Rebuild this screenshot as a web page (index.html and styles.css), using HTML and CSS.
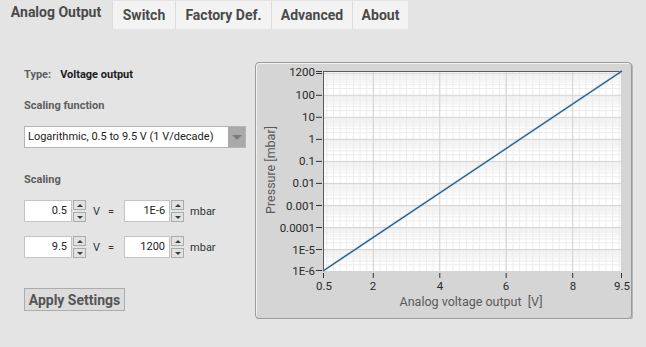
FILE: index.html
```html
<!DOCTYPE html>
<html lang="en">
<head>
    <meta charset="UTF-8">
    <title>Analog Output</title>
    <link rel="stylesheet" href="styles.css">
</head>
<body>
    <div class="tabs">
        <div class="tab active">Analog Output</div>
        <div class="tab tab-switch">Switch</div>
        <div class="tab tab-factory">Factory Def.</div>
        <div class="tab tab-advanced">Advanced</div>
        <div class="tab tab-about">About</div>
    </div>
    <div class="content">
        <div class="settings">
            <div class="type-row"><span class="label">Type:</span><span class="type-value">Voltage output</span></div>
            <div class="label section">Scaling function</div>
            <div class="select">
                <span class="select-text">Logarithmic, 0.5 to 9.5 V (1 V/decade)</span>
                <span class="select-arrow"></span>
            </div>
            <div class="label section scaling">Scaling</div>
            <div class="scale-row">
                <div class="num num-volt">0.5</div>
                <div class="spin"><span class="up"></span><span class="down"></span></div>
                <span class="unit">V</span><span class="eq">=</span>
                <div class="num num-press">1E-6</div>
                <div class="spin"><span class="up"></span><span class="down"></span></div>
                <span class="unit-mbar">mbar</span>
            </div>
            <div class="scale-row second">
                <div class="num num-volt">9.5</div>
                <div class="spin"><span class="up"></span><span class="down"></span></div>
                <span class="unit">V</span><span class="eq">=</span>
                <div class="num num-press">1200</div>
                <div class="spin"><span class="up"></span><span class="down"></span></div>
                <span class="unit-mbar">mbar</span>
            </div>
            <button class="apply">Apply Settings</button>
        </div>
        <div class="chart">
            <svg width="375" height="255" viewBox="0 0 375 255">
                <defs>
                    <pattern id="xminor" patternUnits="userSpaceOnUse" x="51.39" y="0" width="6.644" height="257">
                        <rect width="1" height="257" fill="#ececec"/>
                    </pattern>
                    <pattern id="xmajor" patternUnits="userSpaceOnUse" x="51.39" y="0" width="66.44" height="257">
                        <rect width="1" height="257" fill="#d2d2d2"/>
                    </pattern>
                    <pattern id="yminor" patternUnits="userSpaceOnUse" x="0" y="10.745" width="377" height="22.03">
                        <rect y="1.01" width="377" height="1" fill="#ececec"/>
                        <rect y="2.14" width="377" height="1" fill="#ececec"/>
                        <rect y="3.41" width="377" height="1" fill="#ececec"/>
                        <rect y="4.89" width="377" height="1" fill="#ececec"/>
                        <rect y="6.63" width="377" height="1" fill="#ececec"/>
                        <rect y="8.77" width="377" height="1" fill="#ececec"/>
                        <rect y="11.52" width="377" height="1" fill="#ececec"/>
                        <rect y="15.40" width="377" height="1" fill="#ececec"/>
                    </pattern>
                    <pattern id="ymajor" patternUnits="userSpaceOnUse" x="0" y="10.745" width="377" height="22.03">
                        <rect y="0" width="377" height="1" fill="#d2d2d2"/>
                    </pattern>
                </defs>
                <g transform="translate(-1,-1)">
                    <!-- plot area -->
                    <rect x="68" y="9" width="299" height="200" fill="#fff"/>
                    <rect x="68" y="9" width="299" height="200" fill="url(#xminor)"/>
                    <rect x="68" y="9" width="299" height="200" fill="url(#yminor)"/>
                    <rect x="68" y="9" width="299" height="200" fill="url(#xmajor)"/>
                    <rect x="68" y="9" width="299" height="200" fill="url(#ymajor)"/>
                    <line x1="68" y1="9.5" x2="367" y2="9.5" stroke="#5a5a5a"/>
                    <line x1="68.5" y1="9" x2="68.5" y2="209" stroke="#5a5a5a"/>
                    <line x1="366.5" y1="9" x2="366.5" y2="209" stroke="#d2d2d2"/>

                    <!-- curve -->
                    <line x1="68" y1="209" x2="367" y2="9" stroke="#9cc3e0" stroke-width="2.4" opacity="0.5"/>
                    <line x1="68" y1="209" x2="367" y2="9" stroke="#225d8c" stroke-width="1.3"/>

                    <!-- y axis -->
                    <g class="ticks" stroke="#333" stroke-width="1">
                        <line x1="61" y1="9.5" x2="67" y2="9.5"/>
                        <line x1="61" y1="11.5" x2="67" y2="11.5"/>
                        <line x1="61" y1="33.3" x2="67" y2="33.3"/>
                        <line x1="61" y1="55.3" x2="67" y2="55.3"/>
                        <line x1="61" y1="77.4" x2="67" y2="77.4"/>
                        <line x1="61" y1="99.4" x2="67" y2="99.4"/>
                        <line x1="61" y1="121.4" x2="67" y2="121.4"/>
                        <line x1="61" y1="143.5" x2="67" y2="143.5"/>
                        <line x1="61" y1="165.5" x2="67" y2="165.5"/>
                        <line x1="61" y1="187.5" x2="67" y2="187.5"/>
                        <line x1="61" y1="208.5" x2="67" y2="208.5"/>
                    </g>
                    <g class="tick-label" text-anchor="end">
                        <text x="60" y="13.5">1200</text>
                        <text x="60" y="37.3">100</text>
                        <text x="60" y="59.3">10</text>
                        <text x="60" y="81.4">1</text>
                        <text x="60" y="103.4">0.1</text>
                        <text x="60" y="125.4">0.01</text>
                        <text x="60" y="147.5">0.001</text>
                        <text x="60" y="169.5">0.0001</text>
                        <text x="60" y="191.5">1E-5</text>
                        <text x="60" y="212.5">1E-6</text>
                    </g>

                    <!-- x axis -->
                    <g class="ticks" stroke="#333" stroke-width="1">
                        <line x1="68.5" y1="211" x2="68.5" y2="216"/>
                        <line x1="118.3" y1="211" x2="118.3" y2="216"/>
                        <line x1="184.8" y1="211" x2="184.8" y2="216"/>
                        <line x1="251.2" y1="211" x2="251.2" y2="216"/>
                        <line x1="317.7" y1="211" x2="317.7" y2="216"/>
                        <line x1="366.5" y1="211" x2="366.5" y2="216"/>
                    </g>
                    <g class="tick-label" text-anchor="middle">
                        <text x="69" y="228">0.5</text>
                        <text x="118" y="228">2</text>
                        <text x="185" y="228">4</text>
                        <text x="251" y="228">6</text>
                        <text x="318" y="228">8</text>
                        <text x="367" y="228">9.5</text>
                    </g>
                    <text class="axis-title" x="216" y="244" text-anchor="middle">Analog voltage output &#160;[V]</text>
                    <text class="axis-title" x="0" y="0" text-anchor="middle" transform="translate(20,108) rotate(-90)">Pressure [mbar]</text>
                </g>
            </svg>
        </div>
    </div>
</body>
</html>
```

FILE: styles.css
```css
body {
    margin: 0;
    background-color: #e4e4e4;
    font-family: Roboto, "Liberation Sans", sans-serif;
}
.tabs {
    display: flex;
    height: 29px;
}
.tab {
    box-sizing: border-box;
    margin-top: 1px;
    height: 28px;
    line-height: 28px;
    text-align: center;
    font-size: 14px;
    font-weight: bold;
    color: #4a4a4a;
    background-color: #f3f3f3;
    border-left: 1px solid #dcdcdc;
}
.tab.active {
    width: 112px;
    margin-top: 0;
    line-height: 25px;
    background-color: transparent;
    border-left: none;
}
.tab-switch { width: 63px; }
.tab-factory { width: 96px; }
.tab-advanced { width: 81px; }
.tab-about { width: 56px; }

.content {
    display: flex;
    padding: 33px 0 0 24px;
}
.settings {
    width: 231px;
    padding-top: 4px;
}
.type-row {
    height: 14px;
    line-height: 14px;
}
.label {
    font-size: 11px;
    font-weight: bold;
    color: #5e5e5e;
}
.type-value {
    margin-left: 9px;
    font-size: 11px;
    font-weight: bold;
    color: #1c1c1c;
}
.section {
    margin-top: 19px;
    height: 14px;
    line-height: 14px;
}
.section.scaling {
    margin-top: 25px;
}
.select {
    box-sizing: border-box;
    display: flex;
    width: 222px;
    height: 22px;
    margin-top: 13px;
    border: 1px solid #b4b4b4;
    background-color: #fff;
}
.select-text {
    flex: 1;
    padding-left: 3px;
    font-size: 11px;
    line-height: 20px;
    color: #222;
}
.select-arrow {
    display: flex;
    align-items: center;
    justify-content: center;
    width: 17px;
    background-color: #a9a9a9;
}
.select-arrow::after {
    content: "";
    border-left: 5px solid transparent;
    border-right: 5px solid transparent;
    border-top: 5px solid #7c7c7c;
}
.scale-row {
    display: flex;
    align-items: center;
    height: 22px;
    margin-top: 13px;
}
.scale-row.second {
    margin-top: 14px;
}
.num {
    box-sizing: border-box;
    height: 22px;
    padding-right: 4px;
    text-align: right;
    font-size: 11px;
    line-height: 20px;
    color: #222;
    background-color: #fff;
    border: 1px solid #c4c4c4;
}
.num-volt { width: 48px; }
.num-press { width: 46px; margin-left: 10px; }
.spin {
    display: flex;
    flex-direction: column;
    justify-content: space-between;
    width: 13px;
    height: 22px;
    margin-left: 1px;
}
.spin span {
    box-sizing: border-box;
    display: flex;
    align-items: center;
    justify-content: center;
    height: 10px;
    background-color: #e2e2e2;
    border: 1px solid #ababab;
}
.spin .up::after {
    content: "";
    border-left: 3px solid transparent;
    border-right: 3px solid transparent;
    border-bottom: 3px solid #3c3c3c;
}
.spin .down::after {
    content: "";
    border-left: 3px solid transparent;
    border-right: 3px solid transparent;
    border-top: 3px solid #3c3c3c;
}
.unit {
    margin-left: 7px;
    font-size: 11px;
    color: #333;
}
.eq {
    margin-left: 8px;
    font-size: 11px;
    color: #333;
}
.unit-mbar {
    margin-left: 6px;
    font-size: 11px;
    color: #333;
}
.apply {
    display: block;
    width: 101px;
    height: 23px;
    margin-top: 30px;
    padding: 0;
    font-family: Roboto, "Liberation Sans", sans-serif;
    font-size: 14px;
    font-weight: bold;
    color: #555;
    background-color: #dcdcdc;
    border: 1px solid #acacac;
}
.chart {
    width: 375px;
    height: 255px;
    border: 1px solid #9c9c9c;
    border-radius: 4px;
    background-color: #d5d5d5;
    box-shadow: inset 1px 1px 0 #f0f0f0, 1px 1px 0 #b5b5b5;
}
.chart svg {
    display: block;
}
.tick-label {
    font-family: Roboto, "Liberation Sans", sans-serif;
    font-size: 11.5px;
    fill: #2a2a2a;
}
.axis-title {
    font-family: Roboto, "Liberation Sans", sans-serif;
    font-size: 12.5px;
    fill: #5a5a5a;
}
```
